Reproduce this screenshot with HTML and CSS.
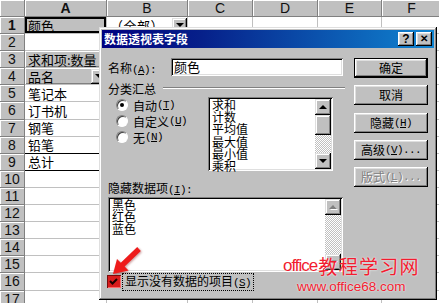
FILE: index.html
```html
<!DOCTYPE html>
<html lang="zh-CN">
<head>
<meta charset="utf-8">
<title>数据透视表字段</title>
<link rel="stylesheet" href="styles.css">
</head>
<body>
<div class="page">
  <div class="sheet">
    <div class="row hdr"><div class="corner"></div><div class="act">A</div><div>B</div><div>C</div><div>D</div><div>E</div><div>F</div></div>
    <div class="row"><div class="rh act">1</div><div class="c pbtn cur">颜色</div><div class="c pval">（全部）<span class="dd"></span></div><div class="c"></div><div class="c"></div><div class="c"></div><div class="c"></div></div>
    <div class="row"><div class="rh">2</div><div class="c"></div><div class="c"></div><div class="c"></div><div class="c"></div><div class="c"></div><div class="c"></div></div>
    <div class="row"><div class="rh">3</div><div class="c pbtn">求和项:数量</div><div class="c"></div><div class="c"></div><div class="c"></div><div class="c"></div><div class="c"></div></div>
    <div class="row"><div class="rh">4</div><div class="c pbtn">品名<span class="dd"></span></div><div class="c"></div><div class="c"></div><div class="c"></div><div class="c"></div><div class="c"></div></div>
    <div class="row"><div class="rh">5</div><div class="c">笔记本</div><div class="c"></div><div class="c"></div><div class="c"></div><div class="c"></div><div class="c"></div></div>
    <div class="row"><div class="rh">6</div><div class="c">订书机</div><div class="c"></div><div class="c"></div><div class="c"></div><div class="c"></div><div class="c"></div></div>
    <div class="row"><div class="rh">7</div><div class="c">钢笔</div><div class="c"></div><div class="c"></div><div class="c"></div><div class="c"></div><div class="c"></div></div>
    <div class="row"><div class="rh">8</div><div class="c pre">铅笔</div><div class="c pre"></div><div class="c"></div><div class="c"></div><div class="c"></div><div class="c"></div></div>
    <div class="row"><div class="rh">9</div><div class="c tot">总计</div><div class="c tot"></div><div class="c"></div><div class="c"></div><div class="c"></div><div class="c"></div></div>
    <div class="row"><div class="rh">10</div><div class="c"></div><div class="c"></div><div class="c"></div><div class="c"></div><div class="c"></div><div class="c"></div></div>
    <div class="row"><div class="rh">11</div><div class="c"></div><div class="c"></div><div class="c"></div><div class="c"></div><div class="c"></div><div class="c"></div></div>
    <div class="row"><div class="rh">12</div><div class="c"></div><div class="c"></div><div class="c"></div><div class="c"></div><div class="c"></div><div class="c"></div></div>
    <div class="row"><div class="rh">13</div><div class="c"></div><div class="c"></div><div class="c"></div><div class="c"></div><div class="c"></div><div class="c"></div></div>
    <div class="row"><div class="rh">14</div><div class="c"></div><div class="c"></div><div class="c"></div><div class="c"></div><div class="c"></div><div class="c"></div></div>
    <div class="row"><div class="rh">15</div><div class="c"></div><div class="c"></div><div class="c"></div><div class="c"></div><div class="c"></div><div class="c"></div></div>
    <div class="row"><div class="rh">16</div><div class="c"></div><div class="c"></div><div class="c"></div><div class="c"></div><div class="c"></div><div class="c"></div></div>
    <div class="row"><div class="rh">17</div><div class="c"></div><div class="c"></div><div class="c"></div><div class="c"></div><div class="c"></div><div class="c"></div></div>
  </div>

  <div class="dlg">
    <div class="titlebar">
      <span class="title">数据透视表字段</span>
      <div class="tbtns"><span class="tb">?</span><span class="tb x">✕</span></div>
    </div>
    <div class="dbody">
      <div class="left">
        <div class="namerow">
          <span class="nlabel">名称<span class="k">(<u>A</u>):</span></span>
          <div class="field">颜色</div>
        </div>
        <div class="group"><span>分类汇总</span><i class="etch"></i></div>
        <div class="subrow">
          <div class="radios">
            <div class="radio"><span class="rb on"></span>自动<span class="k">(<u>T</u>)</span></div>
            <div class="radio"><span class="rb"></span>自定义<span class="k">(<u>U</u>)</span></div>
            <div class="radio"><span class="rb"></span>无<span class="k">(<u>N</u>)</span></div>
          </div>
          <div class="listbox funcs">
            <div class="items">
              <div>求和</div><div>计数</div><div>平均值</div><div>最大值</div><div>最小值</div><div>乘积</div>
            </div>
            <div class="vscroll">
              <span class="sb"><i class="up"></i></span>
              <span class="thumb"></span>
              <span class="track"></span>
              <span class="sb"><i class="down"></i></span>
            </div>
          </div>
        </div>
        <div class="lbl">隐藏数据项<span class="k">(<u>I</u>):</span></div>
        <div class="listbox hidden">
          <div class="items">
            <div>黑色</div><div>红色</div><div>蓝色</div>
          </div>
          <div class="vscroll">
            <span class="sb"><i class="up off"></i></span>
            <span class="track"></span>
            <span class="sb"><i class="down off"></i></span>
          </div>
        </div>
        <div class="check">
          <span class="cb"><svg width="13" height="13" viewBox="0 0 13 13"><path d="M3 6 L5.5 8.5 L10 4" fill="none" stroke="#1a0000" stroke-width="2"/></svg></span>
          <span class="focus">显示没有数据的项目<span class="k">(<u>S</u>)</span></span>
        </div>
      </div>
      <div class="buttons">
        <div class="btn def">确定</div>
        <div class="btn">取消</div>
        <div class="btn">隐藏<span class="k">(<u>H</u>)</span></div>
        <div class="btn">高级<span class="k">(<u>V</u>)...</span></div>
        <div class="btn dis">版式<span class="k">(<u>L</u>)...</span></div>
      </div>
    </div>
  </div>

  <svg class="arrow" width="46" height="40" viewBox="0 0 46 40">
    <polygon points="12,31 27.5,27.5 23.6,23.6 39.8,7.9 36.2,4.1 19.8,19.8 16,16" fill="#ee1b1b"/>
  </svg>

  <div class="wm">
    <div class="wm1"><span class="wl">office</span><span class="wc">教程学习网</span></div>
    <div class="wm2">www.office68.com</div>
  </div>
</div>
</body>
</html>
```

FILE: styles.css
```css
* { box-sizing: border-box; }
html, body { margin: 0; padding: 0; background: #fff; }
body { width: 439px; height: 303px; overflow: hidden; font-family: "Noto Sans CJK SC", sans-serif; }

.page { position: relative; width: 439px; height: 303px; overflow: hidden; }

/* ---------- spreadsheet ---------- */
.sheet { display: flex; flex-direction: column; }
.row {
  display: grid;
  grid-template-columns: 25px 82px 81px 65px 65px 64px 60px;
  height: 17.1px;
  flex: none;
}
.row.hdr { height: 17px; }
.row > div {
  border-right: 1px solid #c0c0c0;
  border-bottom: 1px solid #c0c0c0;
  overflow: hidden;
  white-space: nowrap;
}
.hdr > div, .row > .rh {
  background: #c0c0c0;
  border-right: 1px solid #808080;
  border-bottom: 1px solid #808080;
  box-shadow: inset 1px 1px #fff;
  font-family: "Liberation Sans", Arial, sans-serif;
  font-size: 14px;
  line-height: 16px;
  text-align: center;
  color: #111;
}
.hdr > .act, .row > .rh.act { font-weight: bold; }

.c {
  display: flex;
  align-items: center;
  padding-left: 3px;
  font-size: 13px;
  color: #000;
}
.pbtn {
  background: #c0c0c0;
  box-shadow: inset 1px 1px #fff, inset -1px -1px #808080;
}
.row > .cur { box-shadow: inset 0 0 0 2px #000; }
.pval { padding-left: 3px; letter-spacing: 0.5px; }
.row > .pre { border-bottom-color: #000; }
.row > .tot { border-bottom-color: #000; }

.dd {
  margin-left: auto;
  flex: none;
  width: 15px;
  height: 15px;
  background: #c0c0c0;
  box-shadow: inset -1px -1px #000, inset 1px 1px #dfdfdf, inset -2px -2px #808080, inset 2px 2px #fff;
  display: flex;
  align-items: center;
  justify-content: center;
}
.dd::after {
  content: "";
  border-left: 4px solid transparent;
  border-right: 4px solid transparent;
  border-top: 4px solid #000;
}

/* ---------- dialog ---------- */
.dlg {
  position: absolute;
  left: 99px;
  top: 27px;
  width: 338px;
  height: 273px;
  padding: 3px;
  background: #c0c0c0;
  box-shadow: inset -1px -1px #000, inset 1px 1px #dfdfdf, inset -2px -2px #808080, inset 2px 2px #fff;
  display: flex;
  flex-direction: column;
  font-size: 12px;
  color: #000;
}
.titlebar {
  flex: none;
  height: 18px;
  background: linear-gradient(90deg, #000080 0%, #06208a 30%, #1084d0 100%);
  display: flex;
  align-items: center;
  padding: 0 2px;
  color: #fff;
}
.title { font-weight: bold; font-size: 12px; line-height: 18px; }
.tbtns { margin-left: auto; display: flex; gap: 2px; }
.tb {
  width: 16px;
  height: 14px;
  background: #c0c0c0;
  box-shadow: inset -1px -1px #000, inset 1px 1px #fff, inset -2px -2px #808080, inset 2px 2px #dfdfdf;
  color: #000;
  font: bold 12px/14px "Liberation Sans", Arial, sans-serif;
  text-align: center;
}
.tb.x { font-size: 10px; }

.dbody { flex: 1; display: flex; gap: 9px; padding: 10px 6px 0 6px; }
.left { width: 237px; display: flex; flex-direction: column; }
.k { font-family: "Liberation Mono", monospace; font-size: 11px; letter-spacing: -0.6px; }
.k u { text-underline-offset: 1px; }

.namerow { display: flex; align-items: center; height: 18px; }
.nlabel { width: 63px; flex: none; }
.field {
  width: 172px;
  height: 18px;
  background: #fff;
  box-shadow: inset 1px 1px #808080, inset -1px -1px #fff, inset 2px 2px #000, inset -2px -2px #dfdfdf;
  padding: 0 3px;
  font-size: 13px;
  line-height: 18px;
}

.group { display: flex; align-items: center; height: 14px; margin-top: 5px; }
.etch { flex: 1; height: 2px; border-top: 1px solid #808080; border-bottom: 1px solid #fff; margin-left: 7px; }

.subrow { display: flex; height: 74px; margin-top: 2px; }
.radios { width: 100px; padding-left: 8px; display: flex; flex-direction: column; }
.radio { display: flex; align-items: center; height: 16px; }
.rb {
  width: 12px;
  height: 12px;
  margin-right: 5px;
  border-radius: 50%;
  background: #fff;
  border: 1px solid;
  border-color: #808080 #fff #fff #808080;
  box-shadow: inset 1px 1px #404040;
  display: flex;
  align-items: center;
  justify-content: center;
}
.rb.on::after { content: ""; width: 4px; height: 4px; border-radius: 50%; background: #000; }

.listbox {
  background: #fff;
  padding: 2px;
  box-shadow: inset 1px 1px #808080, inset -1px -1px #fff, inset 2px 2px #000, inset -2px -2px #dfdfdf;
  display: flex;
}
.funcs { width: 125px; }
.hidden { width: 235px; height: 75px; margin-top: 2px; }
.items { flex: 1; line-height: 12.2px; font-size: 12px; padding-left: 2px; }
.hidden .items { padding-left: 2px; }

.vscroll { width: 16px; flex: none; display: flex; flex-direction: column; }
.sb, .thumb {
  flex: none;
  height: 16px;
  background: #c0c0c0;
  box-shadow: inset -1px -1px #000, inset 1px 1px #dfdfdf, inset -2px -2px #808080, inset 2px 2px #fff;
  display: flex;
  align-items: center;
  justify-content: center;
}
.thumb { height: 20px; }
.track {
  flex: 1;
  background-color: #fff;
  background-image: repeating-conic-gradient(#c0c0c0 0 25%, #fff 0 50%);
  background-size: 2px 2px;
}
.up, .down { width: 0; height: 0; border-left: 4px solid transparent; border-right: 4px solid transparent; }
.up { border-bottom: 4px solid #000; }
.down { border-top: 4px solid #000; }
.up.off { border-bottom-color: #808080; filter: drop-shadow(1px 1px 0 #fff); }
.down.off { border-top-color: #808080; filter: drop-shadow(1px 1px 0 #fff); }

.lbl { height: 14px; line-height: 14px; margin-top: 10px; }

.check { display: flex; align-items: center; height: 15px; margin-top: 2px; margin-left: -1px; }
.cb {
  width: 14px;
  height: 13px;
  margin-right: 2px;
  background: #d81c1c;
  box-shadow: inset 1px 1px #7a0a0a, inset -1px -1px #ff6a6a;
  display: flex;
}
.focus { outline: 1px dotted #000; outline-offset: 0; padding: 0 2px; line-height: 14px; }

.buttons { width: 74px; flex: none; display: flex; flex-direction: column; gap: 7.3px; }
.btn {
  height: 20px;
  background: #c0c0c0;
  box-shadow: inset -1px -1px #000, inset 1px 1px #fff, inset -2px -2px #808080, inset 2px 2px #dfdfdf;
  display: flex;
  align-items: center;
  justify-content: center;
  line-height: 20px;
}
.btn.def {
  box-shadow: inset 0 0 0 1px #000, inset -2px -2px #000, inset 2px 2px #fff, inset -3px -3px #808080, inset 3px 3px #dfdfdf;
}
.btn.dis { color: #808080; text-shadow: 1px 1px 0 #fff; }

/* ---------- annotations ---------- */
.arrow { position: absolute; left: 101px; top: 243px; filter: drop-shadow(1px 1px 1px rgba(120, 0, 0, 0.4)); }

.wm { position: absolute; left: 283px; top: 254px; color: #f21c30; text-shadow: 0 0 2px #fff; }
.wm1 { height: 23px; display: flex; align-items: center; white-space: nowrap; }
.wl { font-family: "Liberation Sans", Arial, sans-serif; font-size: 17px; letter-spacing: -1px; margin-right: 1px; }
.wc { font-size: 19px; letter-spacing: 1.3px; }
.wm2 { font-family: "Liberation Sans", Arial, sans-serif; font-size: 13.5px; line-height: 20px; padding-left: 14px; white-space: nowrap; }
```
